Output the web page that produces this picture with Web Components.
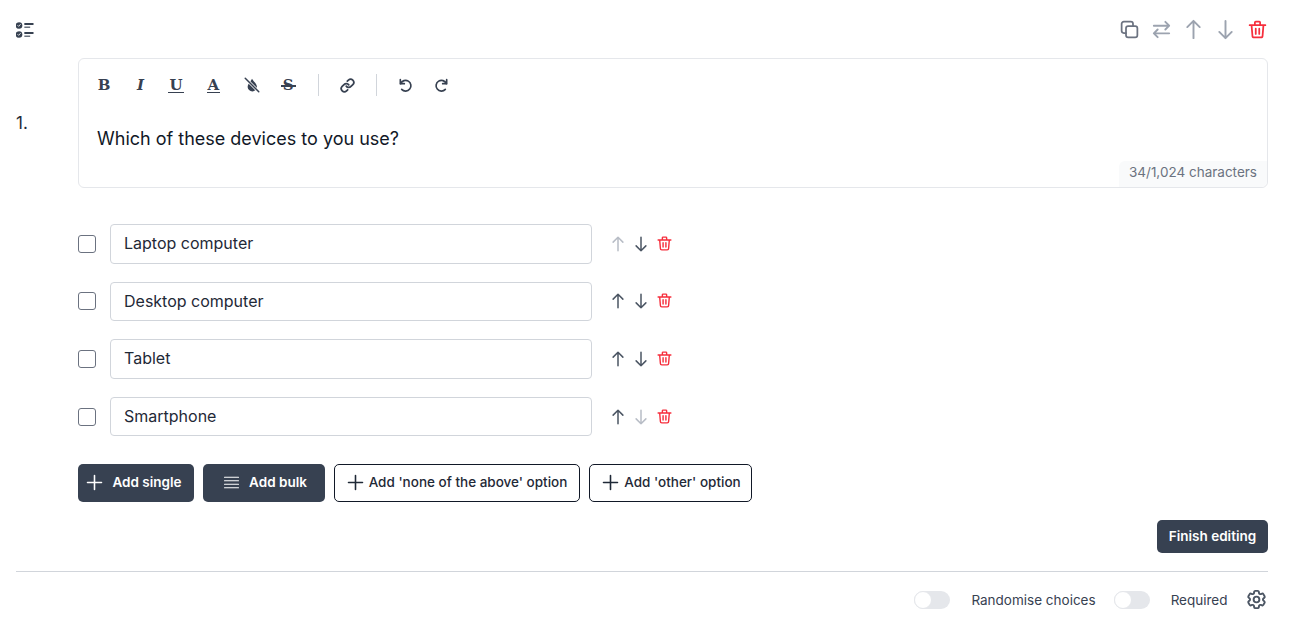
<!DOCTYPE html>
<html>
<head>
<meta charset="utf-8">
<title>Question editor</title>
<style>
  html, body { margin: 0; background: #fff; height: 100%; overflow: hidden; }
  body { font-family: Inter, "Liberation Sans", sans-serif; }
</style>
</head>
<body>
<question-card>
  <q-icon slot="type" name="checklist" size="20" style="color:#374151"></q-icon>
  <icon-btn slot="actions" name="copy" size="21" color="#6b7280"></icon-btn>
  <icon-btn slot="actions" name="swap" size="23" color="#9ca3af"></icon-btn>
  <icon-btn slot="actions" name="up" size="23" color="#9ca3af"></icon-btn>
  <icon-btn slot="actions" name="down" size="23" color="#9ca3af"></icon-btn>
  <icon-btn slot="actions" name="trash" size="21" color="#f62e3c"></icon-btn>
  <rich-editor slot="editor" count="34/1,024 characters">Which of these devices to you use?</rich-editor>
  <option-row slot="options" value="Laptop computer" first></option-row>
  <option-row slot="options" value="Desktop computer"></option-row>
  <option-row slot="options" value="Tablet"></option-row>
  <option-row slot="options" value="Smartphone" last></option-row>
  <q-button slot="add" kind="dark" icon="plus" width="116" nudge="6">Add single</q-button>
  <q-button slot="add" kind="dark" icon="lines" width="122">Add bulk</q-button>
  <q-button slot="add" kind="outline" icon="plus" width="246" nudge="2">Add 'none of the above' option</q-button>
  <q-button slot="add" kind="outline" icon="plus" width="163">Add 'other' option</q-button>
  <q-button slot="finish" kind="dark" width="111" height="33">Finish editing</q-button>
  <q-toggle slot="footer" label="Randomise choices"></q-toggle>
  <q-toggle slot="footer" label="Required"></q-toggle>
  <q-icon slot="footer" name="cog" size="23" style="color:#4b5563;margin-left:-0.5px"></q-icon>
</question-card>

<script>
const ICONS = {
  up: '<path d="M12 21V3M5.500 9.500 12 3l6.500 6.500"/>',
  down: '<path d="M12 3v18M5.500 14.500 12 21l6.500-6.500"/>',
  trash: '<path d="M3 7h18M10 11v6M14 11v6M5.200 7l1 12a2 2 0 0 0 2 2h7.600a2 2 0 0 0 2-2l1-12M9 7V4a1 1 0 0 1 1-1h4a1 1 0 0 1 1 1v3"/>',
  copy: '<rect x="8" y="8" width="13" height="13" rx="2.500"/><path d="M16 8V5.500A2.500 2.500 0 0 0 13.500 3h-8A2.500 2.500 0 0 0 3 5.500v8A2.500 2.500 0 0 0 5.500 16H8"/>',
  swap: '<path d="M4 8h16M16 4l4 4-4 4M20 16H4M8 12l-4 4 4 4"/>',
  plus: '<path d="M12 4v16M4 12h16"/>',
  lines: '<path d="M4 6h16M4 10h16M4 14h16M4 18h16"/>',
  cog: '<path d="M9.594 3.940c.09-.542.56-.94 1.110-.94h2.593c.55 0 1.020.398 1.110.94l.213 1.281c.063.374.313.686.645.87.074.04.147.083.22.127.325.196.72.257 1.075.124l1.217-.456a1.125 1.125 0 0 1 1.370.49l1.296 2.247a1.125 1.125 0 0 1-.26 1.431l-1.003.827c-.293.241-.438.613-.43.992a7.723 7.723 0 0 1 0 .255c-.008.378.137.75.43.991l1.004.827c.424.35.534.955.26 1.430l-1.298 2.247a1.125 1.125 0 0 1-1.369.491l-1.217-.456c-.355-.133-.75-.072-1.076.124a6.470 6.470 0 0 1-.22.128c-.331.183-.581.495-.644.869l-.213 1.281c-.09.543-.56.94-1.110.94h-2.594c-.55 0-1.019-.398-1.110-.94l-.213-1.281c-.062-.374-.312-.686-.644-.87a6.520 6.520 0 0 1-.22-.127c-.325-.196-.72-.257-1.076-.124l-1.217.456a1.125 1.125 0 0 1-1.369-.49l-1.297-2.247a1.125 1.125 0 0 1 .26-1.431l1.004-.827c.292-.24.437-.613.43-.991a6.932 6.932 0 0 1 0-.255c.007-.38-.138-.751-.43-.992l-1.004-.827a1.125 1.125 0 0 1-.26-1.430l1.297-2.247a1.125 1.125 0 0 1 1.370-.491l1.216.456c.356.133.751.072 1.076-.124.072-.044.146-.086.22-.128.332-.183.582-.495.644-.869l.214-1.280Z"/><circle cx="12" cy="12" r="3"/>',
  link: '<path d="M10 13a5 5 0 0 0 7.540.54l3-3a5 5 0 0 0-7.070-7.070l-1.720 1.710"/><path d="M14 11a5 5 0 0 0-7.540-.54l-3 3a5 5 0 0 0 7.070 7.070l1.710-1.710"/>',
  undo: '<path d="M5 4v6h6"/><path d="M5.500 10A8 8 0 1 1 7 18.500"/>',
  redo: '<path d="M19 4v6h-6"/><path d="M18.500 10A8 8 0 1 0 17 18.500"/>',
  nohighlight: '<path d="M12 3.500c1 2.500 6 6 6.500 10.500.3 3.500-2.500 6.500-6 6.500s-6.500-2.500-6.300-6C6.400 10 11 6.500 12 3.500Z" fill="currentColor" stroke="none"/><path d="M3 3l18 18" stroke="#fff" stroke-width="4"/><path d="M3 3l18 18" stroke-width="2"/>',
  checklist: '<circle cx="3.600" cy="7.800" r="4" fill="currentColor" stroke="none"/><circle cx="3.600" cy="18.600" r="4" fill="currentColor" stroke="none"/><path d="M2.200 7.800l1 1 2-2.200M2.200 18.600l1 1 2-2.200" stroke="#fff" stroke-width="1"/><path d="M10 6h11M10 16.800h11" stroke-width="2.200" stroke-linecap="butt"/><path d="M10 9.800h7M10 20.600h7" stroke-width="1.800" stroke-linecap="butt" opacity=".75"/>'
};

class QIcon extends HTMLElement {
  connectedCallback() {
    const size = this.getAttribute('size') || 16;
    const sw = this.getAttribute('stroke') || 2;
    this.attachShadow({ mode: 'open' }).innerHTML = `
      <style>:host { display: inline-flex; flex: none; } svg { display: block; }</style>
      <svg width="${size}" height="${size}" viewBox="0 0 24 24" fill="none" stroke="currentColor"
        stroke-width="${sw}" stroke-linecap="round" stroke-linejoin="round">${ICONS[this.getAttribute('name')]}</svg>`;
  }
}
customElements.define('q-icon', QIcon);

class IconBtn extends HTMLElement {
  connectedCallback() {
    const color = this.getAttribute('color');
    this.attachShadow({ mode: 'open' }).innerHTML = `
      <style>:host { display: flex; width: 22px; height: 22px; align-items: center; justify-content: center; color: ${color}; }</style>
      <q-icon name="${this.getAttribute('name')}" size="${this.getAttribute('size') || 18}"></q-icon>`;
  }
}
customElements.define('icon-btn', IconBtn);

class RichEditor extends HTMLElement {
  connectedCallback() {
    // pad shifts the glyph inside its slot by half the padding
    const tool = (html, pad = '') => `<span class="tool" style="${pad}">${html}</span>`;
    this.attachShadow({ mode: 'open' }).innerHTML = `
      <style>
        :host { display: block; position: relative; height: 128px; border: 1px solid #e5e7eb; border-radius: 6px; }
        .bar { display: flex; align-items: center; height: 22px; padding: 15px 0 0 8px; color: #374151; }
        .tool { display: flex; box-sizing: border-box; width: 36.400px; height: 22px; flex: none; justify-content: center; align-items: center; font: 700 15px "DejaVu Serif", serif; }
        .i { font-style: italic; }
        .u { border-bottom: 1.500px solid currentColor; line-height: 14px; height: 14px; padding: 0 1px; }
        .s { position: relative; line-height: 14px; padding: 0 1px; }
        .s::after { content: ""; position: absolute; left: -1px; right: -1px; top: 7px; height: 1.500px; background: currentColor; }
        .sep { width: 1px; height: 22px; background: #d1d5db; flex: none; }
        .sep.a { margin: 0 10px 0 12.500px; }
        .sep.b { margin: 0 10px 0 11px; }
        .text { padding: 29px 18px 0; font-size: 18px; line-height: 28px; color: #111827; }
        .count { position: absolute; right: 0; bottom: 0; padding: 0 10px; height: 26px; line-height: 22px; font-size: 13.500px; color: #6b7280; background: #f9fafb; border-radius: 6px 0 6px 0; }
      </style>
      <div class="bar">
        ${tool('B', 'padding-right:2px')}
        ${tool('<span class="i">I</span>', 'padding-right:2px')}
        ${tool('<span class="u">U</span>', 'padding-right:4px')}
        ${tool('<span class="u">A</span>', 'padding-right:2px')}
        ${tool('<q-icon name="nohighlight" size="18"></q-icon>', 'padding-left:2px')}
        ${tool('<span class="s">S</span>', 'padding-left:2px')}
        <span class="sep a"></span>
        ${tool('<q-icon name="link" size="15" stroke="2.800"></q-icon>')}
        <span class="sep b"></span>
        ${tool('<q-icon name="undo" size="16" stroke="2.500"></q-icon>')}
        ${tool('<q-icon name="redo" size="16" stroke="2.500"></q-icon>')}
      </div>
      <div class="text"><slot></slot></div>
      <div class="count">${this.getAttribute('count')}</div>`;
  }
}
customElements.define('rich-editor', RichEditor);

class OptionRow extends HTMLElement {
  connectedCallback() {
    const upCol = this.hasAttribute('first') ? '#b8bdc6' : '#4b5563';
    const downCol = this.hasAttribute('last') ? '#b8bdc6' : '#4b5563';
    this.attachShadow({ mode: 'open' }).innerHTML = `
      <style>
        :host { display: flex; align-items: center; height: 39.600px; }
        .box { width: 18px; height: 18px; box-sizing: border-box; border: 1px solid #6b7280; border-radius: 3px; flex: none; margin-right: 14px; }
        .field { width: 482px; height: 100%; box-sizing: border-box; border: 1px solid #d1d5db; border-radius: 4px; padding: 0 13px 1px; display: flex; align-items: center; font-size: 16px; color: #1f2937; flex: none; }
        .acts { display: flex; margin-left: 15px; gap: 0.500px; }
        .act { display: flex; width: 22.500px; justify-content: center; }
      </style>
      <span class="box"></span>
      <div class="field">${this.getAttribute('value')}</div>
      <div class="acts">
        <span class="act" style="color:${upCol}"><q-icon name="up" size="18"></q-icon></span>
        <span class="act" style="color:${downCol}"><q-icon name="down" size="18"></q-icon></span>
        <span class="act" style="color:#f62e3c"><q-icon name="trash" size="17"></q-icon></span>
      </div>`;
  }
}
customElements.define('option-row', OptionRow);

class QButton extends HTMLElement {
  connectedCallback() {
    const dark = this.getAttribute('kind') === 'dark';
    const icon = this.getAttribute('icon');
    const nudge = this.getAttribute('nudge') || 0;
    this.attachShadow({ mode: 'open' }).innerHTML = `
      <style>
        :host { display: inline-flex; align-items: center; justify-content: center; gap: ${dark ? 7 : 3}px; box-sizing: border-box;
          width: ${this.getAttribute('width')}px; height: ${this.getAttribute('height') || 38}px; padding: 0 ${nudge}px 2px 0;
          border-radius: 5px; font-size: 13.500px; white-space: nowrap; flex: none;
          ${dark ? 'background:#374151;color:#fff;font-weight:600;' : 'background:#fff;color:#1f2937;border:1px solid #111827;font-weight:500;'} }
      </style>
      ${icon ? `<q-icon name="${icon}" size="21" stroke="${icon === 'plus' ? 1.800 : 1.300}"></q-icon>` : ''}
      <slot></slot>`;
  }
}
customElements.define('q-button', QButton);

class QToggle extends HTMLElement {
  connectedCallback() {
    this.attachShadow({ mode: 'open' }).innerHTML = `
      <style>
        :host { display: inline-flex; align-items: center; gap: 21px; font-size: 13.500px; color: #374151; }
        .track { width: 36px; height: 18px; border-radius: 9px; background: #e5e7eb; position: relative; flex: none; }
        .knob { position: absolute; left: 0; top: 0; width: 18px; height: 18px; box-sizing: border-box; border-radius: 50%; background: #fff; border: 1px solid #e5e7eb; }
      </style>
      <span class="track"><span class="knob"></span></span>
      <span>${this.getAttribute('label')}</span>`;
  }
}
customElements.define('q-toggle', QToggle);

class QuestionCard extends HTMLElement {
  constructor() {
    super();
    this.attachShadow({ mode: 'open' }).innerHTML = `
      <style>
        :host { display: block; padding: 18px 23px 0 16px; }
        .top { display: flex; justify-content: space-between; align-items: center; height: 22px; margin-bottom: 18px; }
        .actions { display: flex; gap: 10px; }
        .question { display: grid; grid-template-columns: 62px 1fr; align-items: center; font-size: 17px; color: #1f2937; }
        .body { margin-left: 62px; }
        .options { display: flex; flex-direction: column; gap: 18px; margin-top: 36px; }
        .add { display: flex; gap: 9px; margin-top: 28px; }
        .finish { display: flex; justify-content: flex-end; margin-top: 18px; }
        .foot { display: flex; justify-content: flex-end; align-items: center; gap: 18px; margin-top: 18px; padding-top: 17px; border-top: 1px solid #d1d5db; height: 21px; }
      </style>
      <div class="top"><slot name="type"></slot><div class="actions"><slot name="actions"></slot></div></div>
      <div class="question"><span>1.</span><slot name="editor"></slot></div>
      <div class="body">
        <div class="options"><slot name="options"></slot></div>
        <div class="add"><slot name="add"></slot></div>
      </div>
      <div class="finish"><slot name="finish"></slot></div>
      <div class="foot"><slot name="footer"></slot></div>`;
  }
}
customElements.define('question-card', QuestionCard);
</script>
</body>
</html>
